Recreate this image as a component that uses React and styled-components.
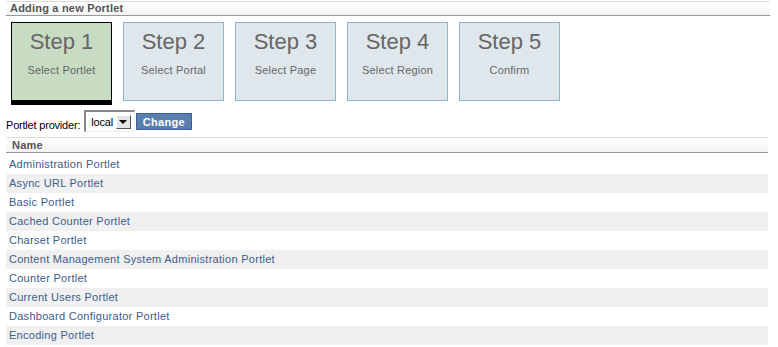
import React, { useState } from 'react'
import styled, { createGlobalStyle } from 'styled-components'

const Global = createGlobalStyle`
    body{
        margin:0;
        padding:1px 8px 0 6px;
        font-family:'Liberation Sans', Arial, sans-serif;
        font-size:11px;
        color:#333;
        background:#fff;
    }
`

const Header = styled('div')`
    height:13px;
    border-top:1px solid #dcdcdc;
    border-bottom:1px solid #999;
    background:linear-gradient(#fff, #f4f4f4);
    padding:0 0 0 4px;
    margin-bottom:6px;
    font-weight:bold;
    color:#555;
    line-height:13px;
    letter-spacing:0.2px;
`

const Steps = styled('div')`
    display:flex;
    gap:11px;
    padding-left:5px;
    height:83px;
    margin-bottom:5px;
`

const Step = styled('div')`
    width:99px;
    height:77px;
    background:${p => p.active ? '#c8dcc4' : '#dfe7ec'};
    border:1px solid ${p => p.active ? '#000' : '#8fb6c8'};
    border-bottom:${p => p.active ? '5px solid #000' : '1px solid #8fb6c8'};
    display:flex;
    flex-direction:column;
    align-items:center;
    color:#666;
`

const StepTitle = styled('div')`
    font-size:22px;
    margin-top:6px;
    line-height:26px;
`

const StepLabel = styled('div')`
    font-size:11px;
    margin-top:9px;
    letter-spacing:0.2px;
`

const ProviderRow = styled('div')`
    display:flex;
    align-items:flex-end;
    height:22px;
    margin-bottom:5px;
`

const Label = styled('span')`
    color:#000;
    margin-right:4px;
    line-height:13px;
    letter-spacing:-0.2px;
`

const SelectBox = styled('div')`
    display:flex;
    align-items:center;
    height:19px;
    padding:0 3px 0 5px;
    border-top:2px solid #888;
    border-left:2px solid #888;
    border-right:1px solid #eee;
    border-bottom:1px solid #eee;
    background:#fff;
    color:#000;
    margin-right:1px;
    align-self:flex-start;
    letter-spacing:-0.2px;
`

const Arrow = styled('span')`
    display:inline-flex;
    align-items:center;
    justify-content:center;
    width:13px;
    height:12px;
    margin-left:3px;
    background:#e4e4e4;
    border:1px solid #fff;
    border-right-color:#555;
    border-bottom-color:#555;
    &:after{
        content:'';
        border-left:4px solid transparent;
        border-right:4px solid transparent;
        border-top:4px solid #000;
    }
`

const Button = styled('button')`
    height:17px;
    width:56px;
    margin-bottom:2px;
    border:1px solid #3e6192;
    background:#5a7eaf;
    color:#fff;
    font-family:'Liberation Sans', Arial, sans-serif;
    font-weight:bold;
    font-size:11px;
    padding:0;
    letter-spacing:0.3px;
`

const Table = styled('div')`
    width:762px;
`

const HeadRow = styled('div')`
    height:14px;
    border-top:1px solid #dcdcdc;
    border-bottom:1px solid #999;
    background:linear-gradient(#fff, #f2f2f2);
    padding-left:6px;
    line-height:14px;
    font-weight:bold;
    color:#555;
    margin-bottom:2px;
    letter-spacing:0.2px;
`

const Row = styled('div')`
    height:19px;
    line-height:19px;
    padding-left:3px;
    background:${p => p.odd ? '#f0f0f0' : '#fff'};
`

const Link = styled('a')`
    color:#3a5d8a;
    text-decoration:none;
    letter-spacing:0.28px;
`

const steps = [
    ['Step 1', 'Select Portlet'],
    ['Step 2', 'Select Portal'],
    ['Step 3', 'Select Page'],
    ['Step 4', 'Select Region'],
    ['Step 5', 'Confirm'],
]

const portlets = [
    'Administration Portlet',
    'Async URL Portlet',
    'Basic Portlet',
    'Cached Counter Portlet',
    'Charset Portlet',
    'Content Management System Administration Portlet',
    'Counter Portlet',
    'Current Users Portlet',
    'Dashboard Configurator Portlet',
    'Encoding Portlet',
]

const App = () => {
    const [current] = useState(0)
    return (
        <>
            <Global />
            <Header>Adding a new Portlet</Header>
            <Steps>
                {steps.map((s, i) => (
                    <div key={i}>
                        <Step active={i === current}>
                            <StepTitle>{s[0]}</StepTitle>
                            <StepLabel>{s[1]}</StepLabel>
                        </Step>
                    </div>
                ))}
            </Steps>
            <ProviderRow>
                <Label>Portlet provider:</Label>
                <SelectBox>local<Arrow /></SelectBox>
                <Button>Change</Button>
            </ProviderRow>
            <Table>
                <HeadRow>Name</HeadRow>
                {portlets.map((p, i) => (
                    <Row key={i} odd={i % 2 === 1}><Link href="#">{p}</Link></Row>
                ))}
            </Table>
        </>
    )
}
export default App
